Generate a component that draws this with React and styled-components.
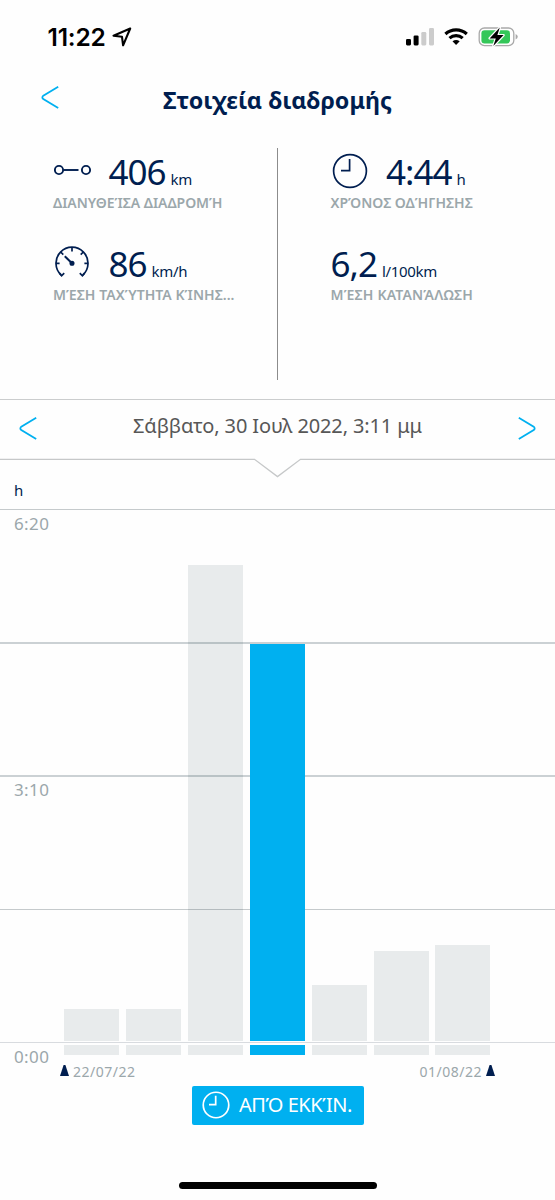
import styled, { createGlobalStyle } from "styled-components";

const GlobalStyle = createGlobalStyle`
  * {
    box-sizing: border-box;
  }
  body {
    margin: 0;
    background: #fefefe;
    font-family: "Noto Sans", "Open Sans", sans-serif;
  }
  svg {
    display: block;
    flex: none;
  }
`;

const trips = [
  { id: 1, height: 32.5 },
  { id: 2, height: 32.5 },
  { id: 3, height: 476 },
  { id: 4, height: 397.5, active: true },
  { id: 5, height: 56 },
  { id: 6, height: 90 },
  { id: 7, height: 96.5 },
];

const Chevron = ({ flip }) => (
  <svg width="18" height="23" viewBox="0 0 18 23" fill="none" stroke="#00b0f0" strokeWidth="1.8">
    <path
      d={
        flip
          ? "M0.8 0.8 L15.7 9.7 Q17.6 11.4 15.7 13.1 L0.8 22"
          : "M17.2 0.8 L2.3 9.7 Q0.4 11.4 2.3 13.1 L17.2 22"
      }
    />
  </svg>
);

const Clock = ({ size, color, weight }) => (
  <svg width={size} height={size} viewBox="0 0 36 36" fill="none" stroke={color} strokeWidth={weight}>
    <circle cx="18" cy="18" r="16.4" />
    <path d="M17.6 6 V17.6 H9" />
  </svg>
);

const Route = () => (
  <svg width="38" height="14" viewBox="0 0 38 14" fill="none" stroke="#001e50" strokeWidth="1.9">
    <circle cx="5" cy="6" r="4.1" />
    <circle cx="32" cy="6" r="4.1" />
    <path d="M9.3 6 H24.5" />
  </svg>
);

const Gauge = () => (
  <svg width="36" height="34" viewBox="0 0 36 34" fill="none" stroke="#001e50" strokeWidth="1.7">
    <path d="M7.2 29 A16 16 0 1 1 28.8 29" />
    <path d="M5.4 27.2 L7.6 29.8 L10.2 27.2 M30.6 27.2 L28.4 29.8 L25.8 27.2 M18 1.5 V5.5 M2 17.3 H5.6 M34 17.3 H30.4 M6.7 6 L9.3 8.6 M29.3 6 L26.7 8.6" />
    <path d="M10.8 10.3 L18 17.3" strokeWidth="2" />
    <circle cx="18" cy="17.3" r="1.7" fill="#001e50" />
  </svg>
);

const StatusIcons = () => (
  <svg width="112" height="22" viewBox="0 0 112 22">
    <rect x="0" y="13" width="5" height="6.4" rx="1.3" />
    <rect x="7.6" y="9.5" width="5" height="9.9" rx="1.3" />
    <rect x="15.3" y="6" width="5" height="13.4" rx="1.3" fill="#ccc" />
    <rect x="23" y="2" width="5" height="17.4" rx="1.3" fill="#ccc" />
    <g fill="none" stroke="#000" strokeWidth="3.1">
      <path d="M39.4 8 A15.8 15.8 0 0 1 60.8 8" />
      <path d="M43.5 12.2 A9.8 9.8 0 0 1 56.7 12.2" />
    </g>
    <path d="M46.5 15.2 Q50.1 12.6 53.7 15.2 L50.1 18.9 Z" />
    <rect x="73.2" y="2" width="34.6" height="17.6" rx="5.2" fill="none" stroke="#a9a9a9" strokeWidth="1.3" />
    <rect x="75.4" y="4.2" width="28.6" height="13.2" rx="3.2" fill="#34c759" />
    <path d="M109.6 8 Q111.8 9 111.8 10.8 Q111.8 12.6 109.6 13.6 Z" fill="#a9a9a9" />
    <path
      d="M93.8 1.6 L83.6 12.4 H89.8 L87.3 20 L97.6 9.1 H91.4 Z"
      stroke="#fff"
      strokeWidth="2.4"
      paintOrder="stroke"
      strokeLinejoin="round"
    />
  </svg>
);

const Stat = ({ icon, value, unit, label, spacing = 0 }) => (
  <StatItem>
    <StatTop>
      {icon && <IconBox>{icon}</IconBox>}
      <Value>{value}</Value>
      <Unit>{unit}</Unit>
    </StatTop>
    <Label $spacing={spacing}>{label}</Label>
  </StatItem>
);

const App = () => {
  return (
    <Screen>
      <GlobalStyle />
      <StatusBar>
        <Time>
          11:22
          <svg width="20" height="20" viewBox="0 0 20 20" fill="none" stroke="#000" strokeWidth="2.1" strokeLinejoin="round">
            <path d="M18.2 1.5 L1.5 8.7 L10 9.8 L11.1 18.3 Z" />
          </svg>
        </Time>
        <StatusIcons />
      </StatusBar>
      <Header>
        <Chevron />
        <Title>Στοιχεία διαδρομής</Title>
      </Header>
      <Stats>
        <Column>
          <Stat icon={<Route />} value="406" unit="km" label="ΔΙΑΝΥΘΕΊΣΑ ΔΙΑΔΡΟΜΉ" spacing={-0.05} />
          <Stat icon={<Gauge />} value="86" unit="km/h" label="ΜΈΣΗ ΤΑΧΎΤΗΤΑ ΚΊΝΗΣ..." spacing={0.05} />
        </Column>
        <Column $divided>
          <Stat icon={<Clock size={36} color="#001e50" weight={1.7} />} value="4:44" unit="h" label="ΧΡΌΝΟΣ ΟΔΉΓΗΣΗΣ" />
          <Stat value="6,2" unit="l/100km" label="ΜΈΣΗ ΚΑΤΑΝΆΛΩΣΗ" spacing={0.2} />
        </Column>
      </Stats>
      <DateBar>
        <Chevron />
        <DateText>Σάββατο, 30 Ιουλ 2022, 3:11 μμ</DateText>
        <Chevron flip />
      </DateBar>
      <Notch width="555" height="20" viewBox="0 0 555 20" fill="none" stroke="#c6c8c9" strokeWidth="1.3">
        <path d="M0 1.3 H254.5 L277.5 18.6 L300.5 1.3 H555" />
      </Notch>
      <AxisUnit>h</AxisUnit>
      <Chart>
        <Band>6:20</Band>
        <Band $heavy />
        <Band $heavy $height={134}>3:10</Band>
        <Band />
        <Band $height={13} $light>0:00</Band>
        <Bars>
          {trips.map((trip) => (
            <Trip key={trip.id}>
              <Bar $active={trip.active} style={{ height: trip.height }} />
              <Stub $active={trip.active} />
            </Trip>
          ))}
        </Bars>
      </Chart>
      <Dates>
        <DateMark>
          <Triangle />
          22/07/22
        </DateMark>
        <DateMark>
          01/08/22
          <Triangle />
        </DateMark>
      </Dates>
      <Footer>
        <ModeButton>
          <Clock size={28} color="#fff" weight={2.2} />
          <span>ΑΠΌ ΕΚΚΊΝ.</span>
        </ModeButton>
        <HomeIndicator />
      </Footer>
    </Screen>
  );
};

const Screen = styled.main`
  width: 555px;
  height: 1200px;
  display: flex;
  flex-direction: column;
  overflow: hidden;
  background: #fefefe;
  color: #001e50;
`;
const StatusBar = styled.div`
  height: 74px;
  display: flex;
  align-items: center;
  justify-content: space-between;
  padding: 0 37px 0 47.5px;
`;
const Time = styled.div`
  display: flex;
  align-items: center;
  gap: 6px;
  margin-bottom: 1px;
  font: 600 24.5px/30px Inter, sans-serif;
  letter-spacing: -0.2px;
  color: #000;
`;
const Header = styled.header`
  height: 74px;
  display: grid;
  grid-template-columns: 18px 1fr 18px;
  padding: 12px 41px 0;
`;
const Title = styled.h1`
  margin: -2px 0 0;
  text-align: center;
  font-size: 23.3px;
  line-height: 32px;
  font-weight: 700;
`;
const Stats = styled.section`
  height: 251px;
  display: flex;
`;
const Column = styled.div`
  width: ${(p) => (p.$divided ? "278px" : "277px")};
  height: 232px;
  padding-left: ${(p) => (p.$divided ? "52.5px" : "53px")};
  border-left: ${(p) => (p.$divided ? "1px solid #8c8c8c" : "none")};
`;
const StatItem = styled.div`
  height: 92px;
`;
const StatTop = styled.div`
  display: flex;
  align-items: baseline;
  height: 46px;
  line-height: 47px;
`;
const IconBox = styled.div`
  width: 55.5px;
  height: 46px;
  display: flex;
  align-items: center;
  align-self: flex-start;
  padding-left: 1px;
`;
const Value = styled.span`
  font-size: 35px;
  letter-spacing: -1px;
`;
const Unit = styled.span`
  margin-left: 5px;
  font-size: 15px;
  letter-spacing: -0.3px;
`;
const Label = styled.div`
  font-size: 14px;
  line-height: 17px;
  font-weight: 600;
  letter-spacing: ${(p) => p.$spacing}px;
  color: #9ba7ab;
  white-space: nowrap;
`;
const DateBar = styled.nav`
  height: 59px;
  display: flex;
  justify-content: space-between;
  align-items: center;
  padding: 0 19px 2px;
  border-top: 1px solid #cbcdce;
`;
const DateText = styled.span`
  padding-bottom: 5px;
  font-size: 20px;
  letter-spacing: -0.13px;
  color: #575757;
`;
const Notch = styled.svg`
  margin-bottom: -1px;
`;
const AxisUnit = styled.div`
  height: 32px;
  padding-left: 14px;
  font-size: 15px;
  line-height: 26px;
`;
const Chart = styled.section`
  position: relative;
  height: 546px;
`;
const Band = styled.div`
  height: ${(p) => p.$height || 133}px;
  padding: 0 14px;
  border-top: ${(p) => (p.$heavy ? "2px solid #cbd1d4" : `1px solid ${p.$light ? "#d8dbdf" : "#c5cacc"}`)};
  font-size: 17px;
  line-height: ${(p) => (p.$heavy ? 26 : 27)}px;
  letter-spacing: 0.4px;
  color: #9ba7ab;
`;
const Bars = styled.div`
  position: absolute;
  inset: 0 0 0 64.3px;
  display: flex;
  align-items: flex-end;
  gap: 6.85px;
`;
const Trip = styled.div`
  width: 55px;
`;
/* idle bars are see-through so the grid lines stay visible */
const Bar = styled.div`
  background: ${(p) => (p.$active ? "#00b0f0" : "rgba(8, 46, 58, 0.09)")};
`;
const Stub = styled(Bar)`
  height: 10px;
  margin-top: 4px;
`;
const Dates = styled.div`
  display: flex;
  justify-content: space-between;
  height: 31px;
  padding: 6px 60px 0 60px;
`;
const DateMark = styled.div`
  display: flex;
  gap: 4px;
  font-size: 14px;
  line-height: 22px;
  letter-spacing: 0.5px;
  color: #9ba7ab;
`;
const Triangle = styled.i`
  width: 9px;
  height: 11px;
  margin-top: 4px;
  background: #001e50;
  clip-path: polygon(40% 0, 60% 0, 100% 100%, 0 100%);
`;
const Footer = styled.footer`
  display: flex;
  flex-direction: column;
  align-items: center;
`;
const ModeButton = styled.button`
  width: 172px;
  height: 38.5px;
  display: flex;
  align-items: center;
  gap: 9px;
  padding: 0 0 1px 10.5px;
  border: 0;
  border-radius: 2px;
  background: #00b0f0;
  color: #fff;
  font: 20px/30px "Noto Sans", sans-serif;
  letter-spacing: -0.45px;
  white-space: nowrap;
`;
const HomeIndicator = styled.div`
  width: 198px;
  height: 7px;
  margin-top: 57px;
  border-radius: 4px;
  background: #000;
`;

export default App;
